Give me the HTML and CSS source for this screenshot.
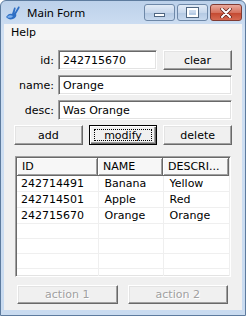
FILE: index.html
```html
<!DOCTYPE html>
<html>

<head>
    <title>Main Form</title>
    <link rel="stylesheet" href="styles.css">
</head>

<body>
    <div class="window">
        <div class="titlebar">
            <svg class="app-icon" width="16" height="16" viewBox="0 0 16 16">
                <path d="M1 12 C3 9 5 8 7 9 L9 3 C10 2 11 3 10.5 4 L9.5 8 L13 2 C14 1 15 2 14.5 3 L11 9 C12 10 11 13 8 14 C5 15 3 14 1 12 Z" fill="#2f6fc4"/>
                <path d="M2 12 C4 10 6 10 8 11 C7 13 4 13.5 2 12 Z" fill="#7fb2ee"/>
            </svg>
            <span class="title">Main Form</span>
            <div class="controls">
                <span class="ctl"><i class="glyph-min"></i></span>
                <span class="ctl"><i class="glyph-max"></i></span>
                <span class="ctl close">
                    <svg width="12" height="10" viewBox="0 0 12 10">
                        <path d="M2 1 L10 9 M10 1 L2 9" stroke="#5a1f18" stroke-width="3.4" stroke-linecap="round"/>
                        <path d="M2 1 L10 9 M10 1 L2 9" stroke="#fff" stroke-width="2" stroke-linecap="round"/>
                    </svg>
                </span>
            </div>
        </div>
        <div class="menubar"><span class="menu-item">Help</span></div>
        <div class="client">
            <div class="row">
                <label>id:</label>
                <input class="field short" value="242715670">
                <button class="btn side">clear</button>
            </div>
            <div class="row">
                <label>name:</label>
                <input class="field" value="Orange">
            </div>
            <div class="row">
                <label>desc:</label>
                <input class="field" value="Was Orange">
            </div>
            <div class="btn-row">
                <button class="btn">add</button>
                <button class="btn default">modify</button>
                <button class="btn">delete</button>
            </div>
            <div class="list">
                <div class="list-head">
                    <span class="col-id">ID</span>
                    <span class="col-name">NAME</span>
                    <span class="col-desc">DESCRI...</span>
                </div>
                <table class="list-body">
                    <tr><td class="col-id">242714491</td><td class="col-name">Banana</td><td class="col-desc">Yellow</td></tr>
                    <tr><td class="col-id">242714501</td><td class="col-name">Apple</td><td class="col-desc">Red</td></tr>
                    <tr><td class="col-id">242715670</td><td class="col-name">Orange</td><td class="col-desc">Orange</td></tr>
                    <tr><td></td><td></td><td></td></tr>
                    <tr><td></td><td></td><td></td></tr>
                    <tr><td></td><td></td><td></td></tr>
                    <tr><td></td><td></td><td></td></tr>
                </table>
            </div>
            <div class="actions">
                <button class="btn" disabled>action 1</button>
                <button class="btn" disabled>action 2</button>
            </div>
        </div>
    </div>
</body>

</html>
```

FILE: styles.css
```css
body {
    margin: 0;
    padding: 0;
    font-family: "DejaVu Sans", sans-serif;
    font-size: 11px;
}

.window {
    width: 246px;
    height: 316px;
    box-sizing: border-box;
    border: 1px solid #5d7b9e;
    border-radius: 6px 6px 0 0;
    background: linear-gradient(to bottom, #bcd1ea 0px, #d0e0f3 30px, #c9dbf0 100%);
    padding: 0 3px 5px 3px;
    display: flex;
    flex-direction: column;
}

.titlebar {
    height: 23px;
    display: flex;
    align-items: center;
}

.app-icon {
    margin: 0 6px 0 1px;
}

.title {
    font-family: "Noto Sans", sans-serif;
    font-size: 11.5px;
    color: #000;
    flex-grow: 1;
}

.controls {
    display: flex;
    gap: 2px;
    align-self: flex-start;
    margin-top: 3px;
}

.ctl {
    width: 31px;
    height: 17px;
    box-sizing: border-box;
    border: 1px solid #6e88a8;
    border-radius: 3px;
    background: linear-gradient(to bottom, #e2ebf6 0%, #c7d7ec 50%, #b3c8e2 51%, #c6d8ee 100%);
    display: flex;
    align-items: center;
    justify-content: center;
}

.ctl.close {
    width: 32px;
    border-color: #7f3b33;
    background: linear-gradient(to bottom, #e9a99c 0%, #d6735f 50%, #c2472f 51%, #d66a52 100%);
}

.glyph-min {
    width: 9px;
    height: 2px;
    margin-top: 5px;
    background: #fff;
    border: 1px solid #4f6681;
}

.glyph-max {
    width: 7px;
    height: 5px;
    border: 2px solid #fff;
    outline: 1px solid #4f6681;
}

.menubar {
    height: 16px;
    background: #f4f4f4;
    display: flex;
    align-items: center;
}

.menu-item {
    padding: 0 7px;
}

.client {
    flex-grow: 1;
    background: #f0f0f0;
    padding: 10px 10px 0 10px;
    display: flex;
    flex-direction: column;
}

.row {
    display: flex;
    height: 20px;
    margin-bottom: 5px;
    align-items: center;
}

.row label {
    width: 40px;
    margin-right: 4px;
    text-align: right;
}

.field {
    flex-grow: 1;
    height: 20px;
    box-sizing: border-box;
    margin: 0;
    padding: 1px 4px 0 4px;
    font-family: "DejaVu Sans", sans-serif;
    font-size: 11px;
    background: #fff;
    border: 1px solid;
    border-color: #a0a0a0 #ffffff #ffffff #a0a0a0;
    box-shadow: inset 1px 1px #696969, inset -1px -1px #e3e3e3;
    outline: none;
}

.field.short {
    flex-grow: 0;
    width: 99px;
}

.btn {
    height: 20px;
    box-sizing: border-box;
    margin: 0;
    padding: 0;
    font-family: "DejaVu Sans", sans-serif;
    font-size: 11px;
    color: #000;
    background: #f0f0f0;
    border: 1px solid;
    border-color: #ffffff #696969 #696969 #ffffff;
    box-shadow: inset -1px -1px #a0a0a0, inset 1px 1px #e3e3e3;
    position: relative;
}

.btn.side {
    flex-grow: 1;
    margin-left: 6px;
}

.btn.default {
    border-color: #000;
    box-shadow: inset 1px 1px #fff, inset -1px -1px #696969, inset -2px -2px #a0a0a0;
}

.btn.default::after {
    content: "";
    position: absolute;
    left: 4px;
    right: 4px;
    top: 3px;
    bottom: 3px;
    border: 1px dotted #000;
}

.btn:disabled {
    color: #a0a0a0;
    text-shadow: 1px 1px #fff;
    height: 19px;
}

.btn-row {
    display: flex;
    gap: 6px;
}

.btn-row .btn {
    flex: 1;
}

.list {
    margin: 11px 1px 0 1px;
    height: 121px;
    box-sizing: border-box;
    background: #fff;
    border: 1px solid;
    border-color: #a0a0a0 #ffffff #ffffff #a0a0a0;
    box-shadow: inset 1px 1px #696969, inset -1px -1px #e3e3e3;
    padding: 1px;
    overflow: hidden;
}

.list-head {
    display: flex;
    height: 18px;
}

.list-head span {
    box-sizing: border-box;
    height: 18px;
    line-height: 17px;
    padding-left: 5px;
    background: #f7f7f7;
    border-right: 1px solid #696969;
    border-bottom: 1px solid #696969;
    box-shadow: inset 1px 1px #fff, inset -1px -1px #a0a0a0;
}

.col-id {
    width: 81px;
}

.col-name {
    width: 65px;
}

.col-desc {
    width: 66px;
}

.list-body {
    border-collapse: collapse;
    table-layout: fixed;
    width: 212px;
}

.list-body td {
    box-sizing: border-box;
    height: 15px;
    padding: 1px 0 0 4px;
    line-height: 14px;
    border-right: 1px solid #efefef;
    border-bottom: 1px solid #efefef;
    white-space: nowrap;
    overflow: hidden;
}

.list-body td.col-name,
.list-body td.col-desc {
    padding-left: 6px;
}

.actions {
    display: flex;
    gap: 10px;
    margin: 8px 4px 0 3px;
}

.actions .btn {
    flex: 1;
}
```
